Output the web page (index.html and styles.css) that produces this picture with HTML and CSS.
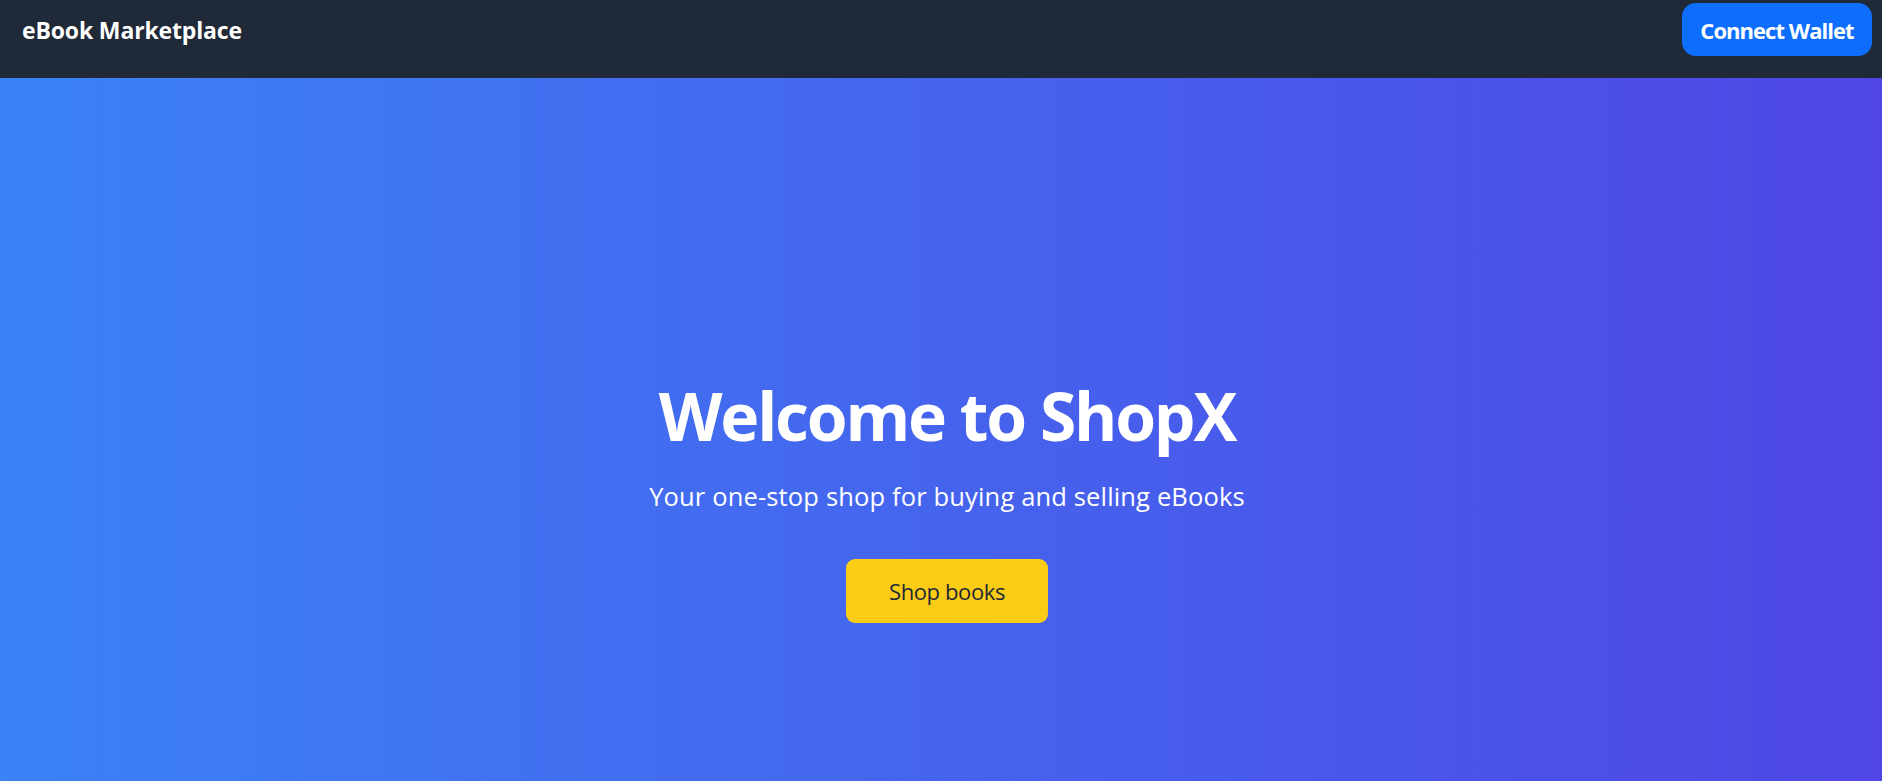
FILE: index.html
```html
<!DOCTYPE html>
<html lang="en">
<head>
<meta charset="utf-8">
<title>eBook Marketplace</title>
<link rel="stylesheet" href="styles.css">
</head>
<body>
<header class="topbar">
  <div class="brand">eBook Marketplace</div>
  <button class="wallet-btn">Connect Wallet</button>
</header>
<main class="hero">
  <h1 class="hero-title">Welcome to ShopX</h1>
  <p class="hero-sub">Your one-stop shop for buying and selling eBooks</p>
  <button class="shop-btn">Shop books</button>
</main>
</body>
</html>
```
FILE: styles.css
```css
* { box-sizing: border-box; }
html, body { margin: 0; padding: 0; }
body {
  font-family: "Open Sans", "Noto Sans", sans-serif;
  height: 781px;
  overflow: hidden;
}
.topbar {
  background: #1f2937;
  height: 78px;
  padding: 3px 10px 22px 22px;
  display: flex;
  align-items: center;
  justify-content: space-between;
}
.brand {
  color: #fff;
  font-weight: 700;
  font-size: 23px;
  line-height: 32px;
  letter-spacing: -0.15px;
}
.wallet-btn {
  font-family: inherit;
  background: #0d6efd;
  color: #fff;
  border: none;
  border-radius: 14px;
  width: 190px;
  height: 53px;
  font-size: 22px;
  font-weight: 700;
  letter-spacing: -0.95px;
  padding: 0;
}
.hero {
  height: 703px;
  background: linear-gradient(to right, #3b82f6, #4f46e5);
  display: flex;
  flex-direction: column;
  align-items: center;
  padding-top: 301px;
  padding-left: 12px;
  color: #fff;
}
.hero-title {
  margin: 0;
  font-size: 66px;
  line-height: 72px;
  font-weight: 700;
  letter-spacing: -2.2px;
}
.hero-sub {
  margin: 29px 0 0;
  font-size: 25.5px;
  line-height: 32px;
  letter-spacing: 0.15px;
}
.shop-btn {
  font-family: inherit;
  margin-top: 47px;
  background: #facc15;
  color: #1f2937;
  border: none;
  border-radius: 9px;
  width: 202px;
  height: 64px;
  font-size: 22px;
  letter-spacing: -0.4px;
  padding: 0;
}
```
